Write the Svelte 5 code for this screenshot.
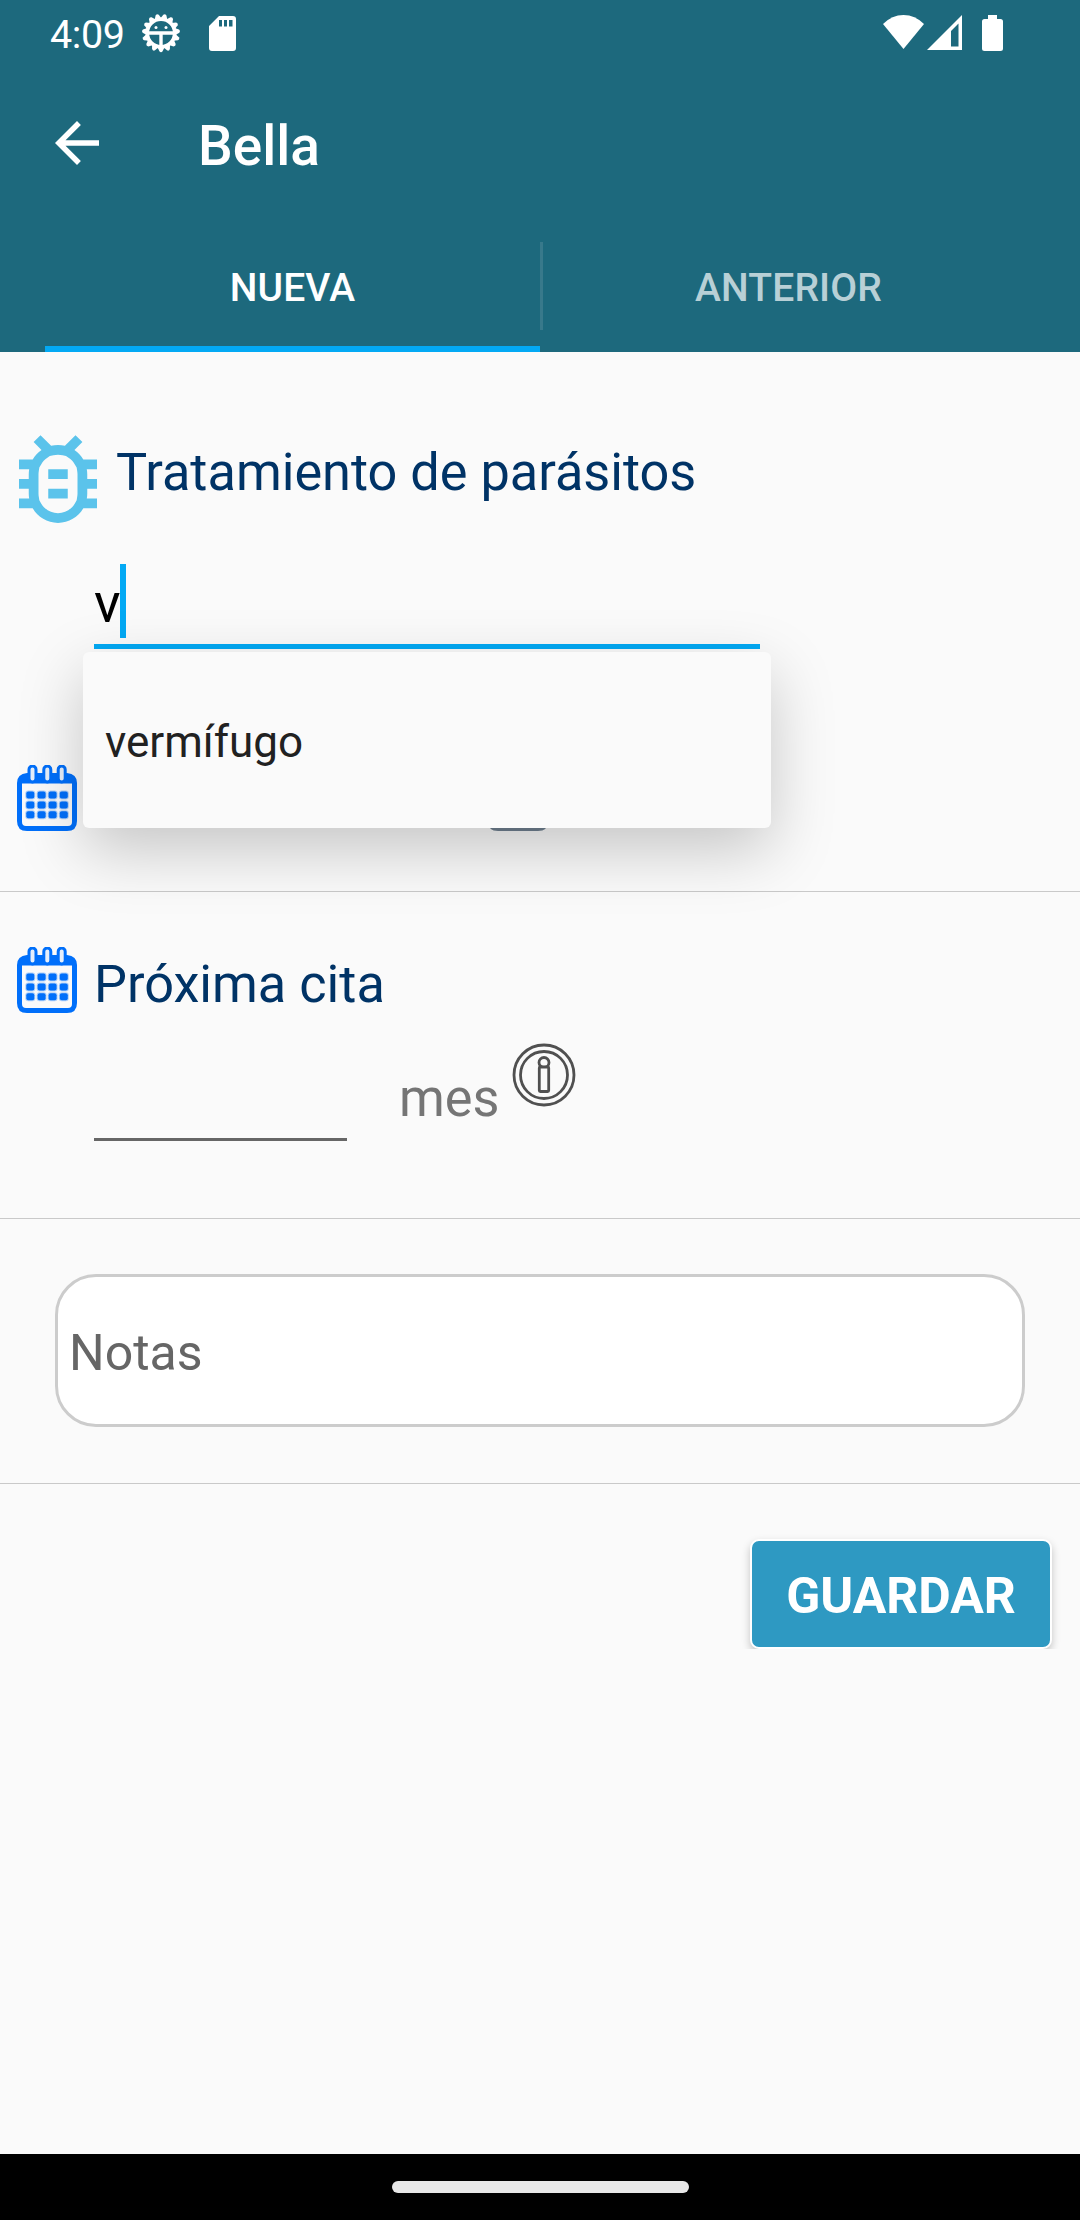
<script>
  const tabs = [
    { label: 'NUEVA', active: true },
    { label: 'ANTERIOR', active: false }
  ];
  const suggestions = ['vermífugo'];
  const columns = [13.3, 24.6, 35.6, 46.8];
  const rows = [30, 40, 49.8];
  const rings = [15.5, 30.3, 44.7];
  const teeth = Array.from({ length: 15 }, (_, i) => i * 24 + 12);
</script>

{#snippet calendar(kind)}
  <svg class="calendar {kind}" viewBox="0 0 60 66">
    <path fill="currentColor" fill-rule="evenodd" d="M10 8H50Q60 9 60 18V56Q60 66 50 66H10Q0 66 0 56V18Q0 9 10 8ZM5 18.500V57Q5 61 9 61H51Q55 61 55 57V18.500Z" />
    {#each rings as x}
      <rect x={x - 3.5} y="1" width="7" height="16" rx="3.5" fill="#e6effb" stroke="currentColor" stroke-width="3" />
    {/each}
    {#each rows as y}
      {#each columns as x}
        <rect x={x - 5} y={y - 4.5} width="10" height="9" rx="3" fill="currentColor" opacity=".3" />
        <rect x={x - 4} y={y - 3.5} width="8" height="7" rx="2" fill="currentColor" />
      {/each}
    {/each}
  </svg>
{/snippet}

<div class="screen">
  <header>
    <div class="status">
      <span class="clock">4:09</span>
      <svg class="gear" viewBox="-20 -20 40 40">
        {#each teeth as angle}
          <path d="M-3.6-14L-1.6-18.3Q0-20 1.6-18.3L3.6-14Z" fill="#fff" transform="rotate({angle})" />
        {/each}
        <circle r="13.7" fill="none" stroke="#fff" stroke-width="3.6" />
        <path d="M-13 0H13M0 0V14" stroke="#fff" stroke-width="3.4" />
        <circle cx="-5" cy="-5.5" r="1.5" fill="#fff" />
        <circle cx="5" cy="-5.5" r="1.5" fill="#fff" />
      </svg>
      <svg class="sd" viewBox="0 0 27 35">
        <path fill="#fff" fill-rule="evenodd" d="M10 0H24Q27 0 27 3V32Q27 35 24 35H3Q0 35 0 32V10ZM10 4V10.5H13V4ZM15 4V10.5H18V4ZM20 4V10.5H23.500V4Z" />
      </svg>
      <svg class="wifi" viewBox="0 0 41 34"><path fill="#fff" d="M0 9Q9 0 20.500 0T41 9L20.500 34Z" /></svg>
      <svg class="signal" viewBox="0 0 35 35"><path fill="#fff" fill-rule="evenodd" d="M35 0V35H0ZM31.500 8.500L24 16V31.500H31.500Z" /></svg>
      <svg class="battery" viewBox="0 0 21 36"><path fill="#fff" d="M6 0H15V4H18.500Q21 4 21 6.500V33.500Q21 36 18.500 36H2.500Q0 36 0 33.500V6.500Q0 4 2.500 4H6Z" /></svg>
    </div>
    <div class="toolbar">
      <svg class="back" viewBox="0 0 24 24"><path fill="#fff" d="M20 11H7.830l5.590-5.590L12 4l-8 8 8 8 1.410-1.410L7.830 13H20v-2z" /></svg>
      <h1>Bella</h1>
    </div>
    <nav>
      {#each tabs as tab}
        <div class="tab" class:active={tab.active}>{tab.label}</div>
      {/each}
    </nav>
  </header>

  <main>
    <section class="treatment">
      <div class="heading">
        <svg class="bug" viewBox="4 3 16 18">
          <path fill="#5bc3eb" d="M20 8h-2.810c-.45-.78-1.070-1.450-1.820-1.960L17 4.410 15.590 3l-2.170 2.170C12.960 5.060 12.490 5 12 5s-.96.06-1.410.17L8.410 3 7 4.410l1.620 1.630C7.880 6.550 7.260 7.220 6.810 8H4v2h2.090c-.05.33-.09.66-.09 1v1H4v2h2v1c0 .34.04.67.09 1H4v2h2.810c1.040 1.790 2.970 3 5.190 3s4.150-1.210 5.190-3H20v-2h-2.090c.05-.33.09-.66.09-1v-1h2v-2h-2v-1c0-.34-.04-.67-.09-1H20V8zm-4 4v3c0 .22-.03.47-.07.7l-.1.65-.37.65c-.72 1.240-2.040 2-3.460 2s-2.740-.77-3.460-2l-.37-.64-.1-.65C8.030 15.480 8 15.230 8 15v-4c0-.23.03-.48.07-.7l.1-.65.37-.65c.3-.52.72-.97 1.210-1.310l.57-.39.74-.18c.31-.08.63-.12.94-.12.32 0 .63.04.95.12l.68.16.61.42c.5.34.91.78 1.210 1.310l.38.65.1.65c.04.22.07.47.07.69v1zm-6 2h4v2h-4zm0-4h4v2h-4z" />
        </svg>
        <h2>Tratamiento de parásitos</h2>
      </div>
      <div class="field">
        <span class="typed">v</span><span class="caret"></span>
        <div class="popup">
          {#each suggestions as item}
            <div class="option">{item}</div>
          {/each}
        </div>
      </div>
      <div class="dates">
        {@render calendar('blue')}
        {@render calendar('grey')}
      </div>
    </section>

    <section class="next">
      <div class="heading">
        {@render calendar('blue')}
        <h2>Próxima cita</h2>
      </div>
      <div class="interval">
        <div class="amount"></div>
        <span class="unit">mes</span>
        <svg class="info" viewBox="-32 -32 64 64" fill="none" stroke="#505050" stroke-width="2.800">
          <circle r="30" />
          <circle r="23.500" />
          <circle cy="-12.500" r="5" />
          <rect x="-4.700" y="-8" width="9.400" height="24.500" rx="1" fill="#fafafa" />
        </svg>
      </div>
    </section>

    <section class="notes">
      <div class="notebox">Notas</div>
    </section>

    <div class="actions">
      <button>GUARDAR</button>
    </div>
  </main>

  <footer><div class="pill"></div></footer>
</div>

<style>
  :global(body) { margin: 0; }
  .screen {
    display: flex;
    flex-direction: column;
    width: 1080px;
    height: 2220px;
    overflow: hidden;
    background: #fafafa;
    font-family: Roboto, "Liberation Sans", sans-serif;
  }
  .screen * { box-sizing: border-box; }
  svg { display: block; flex: none; }
  h1, h2 { margin: 0; white-space: nowrap; }

  header { height: 352px; background: #1d697d; color: #fff; }
  .status { display: flex; align-items: flex-start; height: 66px; padding: 15px 77px 0 50px; }
  .clock { width: 91px; font-size: 39.5px; line-height: 40px; letter-spacing: -0.4px; }
  .gear { width: 40px; height: 40px; margin-top: -2px; }
  .sd { width: 27px; height: 35px; margin: 1px auto 0 28px; }
  .wifi { width: 41px; height: 34px; }
  .signal { width: 35px; height: 35px; margin: 0 20px 0 3px; }
  .battery { width: 21px; height: 36px; }

  .toolbar { display: flex; align-items: center; height: 154px; padding-left: 44px; }
  .back { width: 66px; height: 66px; }
  h1 { margin-left: 88px; padding-top: 6px; font-size: 55px; line-height: 64px; font-weight: 500; }

  nav { display: flex; height: 132px; padding: 0 43px 0 45px; }
  .tab {
    position: relative;
    flex: 1;
    padding-top: 4px;
    text-align: center;
    font-size: 39px;
    line-height: 128px;
    font-weight: 500;
    letter-spacing: 0.15px;
    color: rgba(255, 255, 255, 0.7);
  }
  .tab.active { flex: 0 0 495px; border-bottom: 6px solid #03a9f4; color: #fff; }
  .tab.active::after {
    content: "";
    position: absolute;
    right: -3px;
    top: 22px;
    width: 3px;
    height: 88px;
    background: #38798b;
  }

  main { flex: 1; }
  section { border-bottom: 1px solid #c9c9c9; }
  .heading { display: flex; align-items: flex-start; height: 68px; }
  h2 { font-size: 52.25px; line-height: 62px; font-weight: 400; color: #036; }
  .calendar { width: 60px; height: 66px; overflow: hidden; }
  .blue { color: #006ffa; filter: blur(0.7px); }
  .grey { color: #708090; }

  .treatment { height: 540px; padding: 83px 0 0 19px; }
  .bug { width: 78px; height: 88px; }
  .treatment h2 { margin: 7px 0 0 19px; }
  .field {
    position: relative;
    display: flex;
    width: 666px;
    height: 85px;
    margin: 61px 0 0 75px;
    border-bottom: 5px solid #03a9f4;
  }
  .typed { width: 26px; padding-top: 2px; font-size: 55px; line-height: 74px; color: #000; }
  .caret { width: 6px; height: 74px; background: #03a9f4; }
  .popup {
    position: absolute;
    left: -11px;
    top: 88px;
    z-index: 2;
    width: 688px;
    height: 176px;
    border-radius: 6px;
    background: #fafafa;
    box-shadow: 0 22px 64px rgba(0, 0, 0, 0.21);
  }
  .option { padding: 4px 22px 0; font-size: 44px; line-height: 172px; color: #212121; }
  .dates { display: flex; gap: 411px; margin: 116px 0 0 -2px; }

  .next { height: 327px; padding: 55px 0 0 17px; }
  .next h2 { margin: 7px 0 0 17px; }
  .interval { display: flex; align-items: flex-start; margin: 28px 0 0 77px; }
  .amount { width: 253px; height: 98px; border-bottom: 3px solid #666; }
  .unit { width: 113px; margin: 25px 0 0 52px; font-size: 52.25px; line-height: 62px; color: #757575; }
  .info { width: 64px; height: 64px; }

  .notes { height: 265px; padding: 55px 55px 0; }
  .notebox {
    height: 153px;
    padding-left: 11px;
    border: 3px solid #ccc;
    border-radius: 41px;
    background: #fff;
    font-size: 50px;
    line-height: 152px;
    color: #666;
  }

  .actions { display: flex; justify-content: flex-end; height: 165px; padding: 55px 28px 0 0; overflow: hidden; }
  button {
    width: 302px;
    height: 110px;
    padding: 4px 0 0;
    border: 2px solid #fff;
    border-radius: 9px;
    background: #2e99c2;
    box-shadow: 0 4px 8px rgba(0, 0, 0, 0.22);
    font-family: inherit;
    font-size: 50px;
    font-weight: 700;
    color: #fff;
  }

  footer { display: flex; justify-content: center; height: 66px; padding-top: 27px; background: #000; }
  .pill { width: 297px; height: 12px; border-radius: 6px; background: #e8e8e8; }
</style>
